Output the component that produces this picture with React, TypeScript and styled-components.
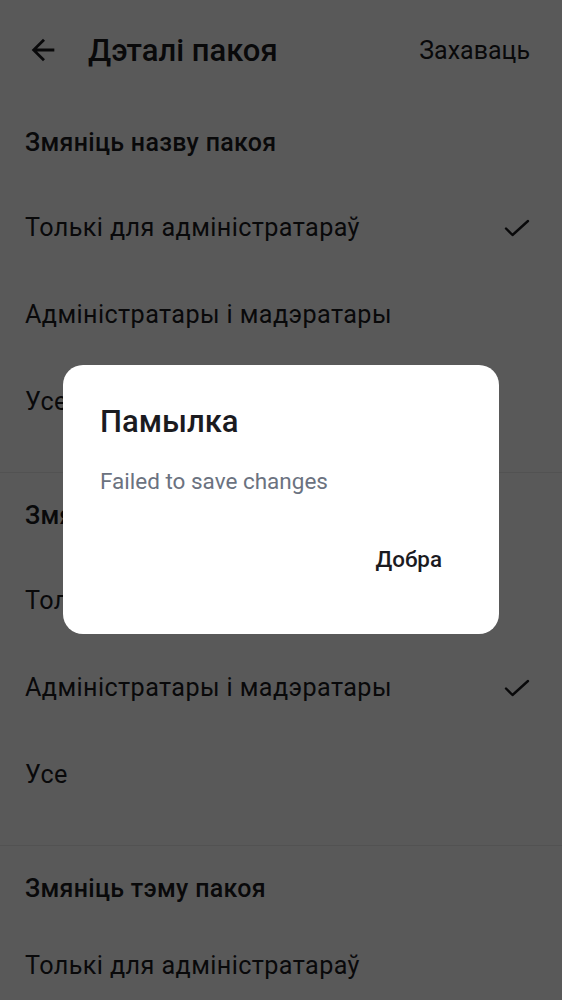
import React from "react";
import styled, { createGlobalStyle } from "styled-components";

const Global = createGlobalStyle`
  html, body { margin: 0; padding: 0; background: #fff; }
  body { font-family: Roboto, "Noto Sans", "Liberation Sans", sans-serif; -webkit-font-smoothing: antialiased; }
  * { box-sizing: border-box; }
`;

const Page = styled.div`
  position: relative;
  width: 562px;
  height: 1000px;
  overflow: hidden;
  background: #ffffff;
  color: #1b1b1f;
`;

const Header = styled.header`
  height: 100px;
  display: flex;
  align-items: center;
  padding: 0 32px 0 26px;
`;

const BackButton = styled.button`
  width: 34px;
  height: 34px;
  padding: 0;
  border: 0;
  background: none;
  display: flex;
  align-items: center;
  justify-content: center;
  color: #1b1b1f;
`;

const Title = styled.h1`
  flex: 1;
  margin: 0 0 0 28px;
  font-size: 31px;
  font-weight: 500;
`;

const SaveButton = styled.button`
  border: 0;
  background: none;
  padding: 0;
  font-family: inherit;
  font-size: 25px;
  font-weight: 400;
  color: #1b1b1f;
`;

const Section = styled.section<{ $last?: boolean }>`
  padding-bottom: ${(p) => (p.$last ? 0 : 27)}px;
  border-bottom: ${(p) => (p.$last ? "none" : "1px solid #ececec")};
`;

const SectionTitle = styled.h2<{ $h: number; $pt: number }>`
  margin: 0;
  height: ${(p) => p.$h}px;
  display: flex;
  align-items: center;
  padding: ${(p) => p.$pt}px 25px 0;
  font-size: 25px;
  font-weight: 500;
  letter-spacing: 0.3px;
`;

const Row = styled.div`
  height: 87px;
  display: flex;
  align-items: center;
  justify-content: space-between;
  padding: 0 32px 0 25px;
  font-size: 25.2px;
  letter-spacing: 0.4px;
  font-weight: 400;
`;

const Overlay = styled.div`
  position: absolute;
  inset: 0;
  background: rgba(0, 0, 0, 0.65);
  display: flex;
  align-items: flex-start;
  justify-content: center;
  padding-top: 365px;
`;

const Dialog = styled.div`
  width: 436px;
  height: 269px;
  background: #fff;
  border-radius: 20px;
  padding: 37px 37px 0 37px;
  display: flex;
  flex-direction: column;
`;

const DialogTitle = styled.h3`
  margin: 0;
  font-size: 31px;
  font-weight: 500;
  line-height: 40px;
  color: #1b1b1f;
`;

const DialogBody = styled.p`
  margin: 24px 0 0;
  font-size: 22.5px;
  line-height: 30px;
  color: #6b7280;
`;

const Actions = styled.div`
  margin-top: 50px;
  display: flex;
  justify-content: flex-end;
  padding-right: 20px;
`;

const OkButton = styled.button`
  border: 0;
  background: none;
  padding: 0;
  font-family: inherit;
  font-size: 22.4px;
  font-weight: 500;
  color: #1b1b1f;
`;

const Check = () => (
  <svg width="26" height="18" viewBox="0 0 26 18" fill="none">
    <path d="M2 9.5L8.5 16L24 2" stroke="#1b1b1f" strokeWidth="2.4" strokeLinecap="round" strokeLinejoin="round" />
  </svg>
);

const ArrowBack = () => (
  <svg width="34" height="34" viewBox="0 0 24 24">
    <path d="M20 11H7.83l5.59-5.59L12 4l-8 8 8 8 1.41-1.41L7.83 13H20v-2z" fill="#1b1b1f" />
  </svg>
);

type Opt = { label: string; checked?: boolean };

const sections: { title: string; titleH: number; titlePt: number; rows: Opt[] }[] = [
  {
    title: "Змяніць назву пакоя",
    titleH: 84,
    titlePt: 0,
    rows: [
      { label: "Толькі для адміністратараў", checked: true },
      { label: "Адміністратары і мадэратары" },
      { label: "Усе" },
    ],
  },
  {
    title: "Змяніць аватар пакоя",
    titleH: 84,
    titlePt: 0,
    rows: [
      { label: "Толькі для адміністратараў" },
      { label: "Адміністратары і мадэратары", checked: true },
      { label: "Усе" },
    ],
  },
  {
    title: "Змяніць тэму пакоя",
    titleH: 76,
    titlePt: 8,
    rows: [{ label: "Толькі для адміністратараў" }],
  },
];

export default function App() {
  return (
    <>
      <Global />
      <Page>
        <Header>
          <BackButton aria-label="Назад">
            <ArrowBack />
          </BackButton>
          <Title>Дэталі пакоя</Title>
          <SaveButton>Захаваць</SaveButton>
        </Header>
        {sections.map((s, i) => (
          <Section key={s.title} $last={i === sections.length - 1}>
            <SectionTitle $h={s.titleH} $pt={s.titlePt}>
              {s.title}
            </SectionTitle>
            {s.rows.map((r) => (
              <Row key={r.label}>
                <span>{r.label}</span>
                {r.checked && <Check />}
              </Row>
            ))}
          </Section>
        ))}
        <Overlay>
          <Dialog>
            <DialogTitle>Памылка</DialogTitle>
            <DialogBody>Failed to save changes</DialogBody>
            <Actions>
              <OkButton>Добра</OkButton>
            </Actions>
          </Dialog>
        </Overlay>
      </Page>
    </>
  );
}
